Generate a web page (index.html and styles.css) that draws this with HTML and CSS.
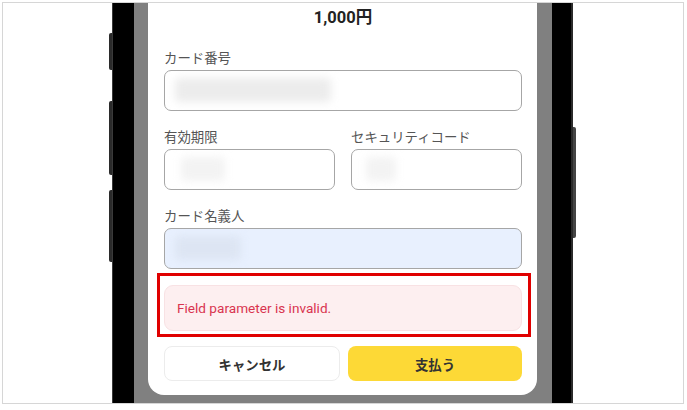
FILE: index.html
```html
<!DOCTYPE html>
<html lang="ja">
  <head>
    <meta charset="UTF-8" />
    <meta name="viewport" content="width=device-width, initial-scale=1.0" />
    <title>カード決済</title>
    <link rel="stylesheet" href="styles.css">
  </head>
  <body>
    <div class="frame">
      <div class="phone">
        <span class="side-btn left b1"></span>
        <span class="side-btn left b2"></span>
        <span class="side-btn left b3"></span>
        <span class="side-btn right b4"></span>

        <div class="screen">
          <div class="sheet">
            <div class="amount">1,000円</div>

            <div class="field">
              <label>カード番号</label>
              <div class="input"><span class="masked w-number"></span></div>
            </div>

            <div class="row">
              <div class="field">
                <label>有効期限</label>
                <div class="input"><span class="masked w-expiry"></span></div>
              </div>
              <div class="field">
                <label>セキュリティコード</label>
                <div class="input"><span class="masked w-cvc"></span></div>
              </div>
            </div>

            <div class="field last">
              <label>カード名義人</label>
              <div class="input autofill"><span class="masked w-name"></span></div>
            </div>

            <div class="error-wrap">
              <div class="error">Field parameter is invalid.</div>
              <span class="highlight"></span>
            </div>

            <div class="actions">
              <button class="btn cancel">キャンセル</button>
              <button class="btn pay">支払う</button>
            </div>
          </div>
        </div>
      </div>
    </div>
  </body>
</html>
```

FILE: styles.css
```css
* {
  box-sizing: border-box;
}

body {
  margin: 0;
  background: #fff;
  font-family: Roboto, 'Noto Sans CJK JP', sans-serif;
  color: #333;
}

.frame {
  margin: 2px 0 0 2px;
  width: 682px;
  height: 402px;
  border: 1px solid #d6d6d6;
  padding-left: 109px;
  overflow: hidden;
  display: flex;
}

/* phone body */
.phone {
  position: relative;
  width: 461px;
  height: 100%;
  background: #000;
  padding: 0 21px 0 22px;
  box-shadow: inset 1px 0 0 #3a3a3a, inset -2px 0 0 #2a2a2a;
}

.side-btn {
  position: absolute;
  width: 3px;
  background: #2b2b2b;
}

.side-btn.left {
  left: -3px;
  border-radius: 2px 0 0 2px;
}

.side-btn.right {
  right: -3px;
  border-radius: 0 2px 2px 0;
  background: #444;
}

.b1 { top: 30px; height: 37px; }
.b2 { top: 98px; height: 74px; }
.b3 { top: 187px; height: 72px; }
.b4 { top: 124px; height: 111px; }

/* dimmed screen behind the sheet */
.screen {
  height: 100%;
  background: #808080;
  padding: 0 15px 8px 14px;
  display: flex;
  flex-direction: column;
  justify-content: flex-end;
}

.sheet {
  background: #fff;
  border-radius: 0 0 16px 16px;
  padding: 5px 15px 14px 16px;
}

.amount {
  text-align: center;
  font-weight: 700;
  font-size: 16.5px;
  line-height: 20px;
  color: #222;
  margin-bottom: 22px;
}

.field {
  margin-bottom: 18px;
}

.field.last {
  margin-bottom: 16px;
}

.field label {
  display: block;
  font-size: 13.4px;
  line-height: 18px;
  color: #555;
  margin-bottom: 2px;
}

.input {
  height: 41px;
  border: 1px solid #a6a6a6;
  border-radius: 7px;
  background: #fff;
  padding: 7px 10px;
  overflow: hidden;
}

.input.autofill {
  background: #e8f0fe;
}

/* blurred values */
.masked {
  display: block;
  height: 24px;
  border-radius: 4px;
  filter: blur(4px);
  background: #ececec;
}

.w-number { width: 156px; }
.w-expiry { width: 44px; margin-left: 6px; background: #f3f3f3; }
.w-cvc { width: 30px; margin-left: 4px; background: #f3f3f3; }
.w-name { width: 66px; background: #dde5f3; }

.row {
  display: flex;
  gap: 16px;
}

.row .field {
  flex: 1;
}

.error-wrap {
  position: relative;
}

.error {
  height: 46px;
  background: #fdeff0;
  border: 1px solid #f8e2e4;
  border-radius: 9px;
  padding-left: 12px;
  display: flex;
  align-items: center;
  font-size: 13.6px;
  color: #d9344f;
}

/* red outline drawn around the message */
.highlight {
  position: absolute;
  top: -12px;
  left: -7px;
  right: -9px;
  bottom: -6px;
  border: 3.5px solid #e00000;
}

.actions {
  display: flex;
  gap: 8px;
  margin-top: 15px;
}

.btn {
  flex: 1;
  height: 35px;
  border-radius: 8px;
  font-family: 'Noto Sans CJK JP', sans-serif;
  font-size: 13.4px;
  font-weight: 700;
  color: #333;
  cursor: pointer;
}

.btn.cancel {
  background: #fff;
  border: 1px solid #ececec;
  font-weight: 600;
}

.btn.pay {
  background: #fdd936;
  border: none;
}
```
